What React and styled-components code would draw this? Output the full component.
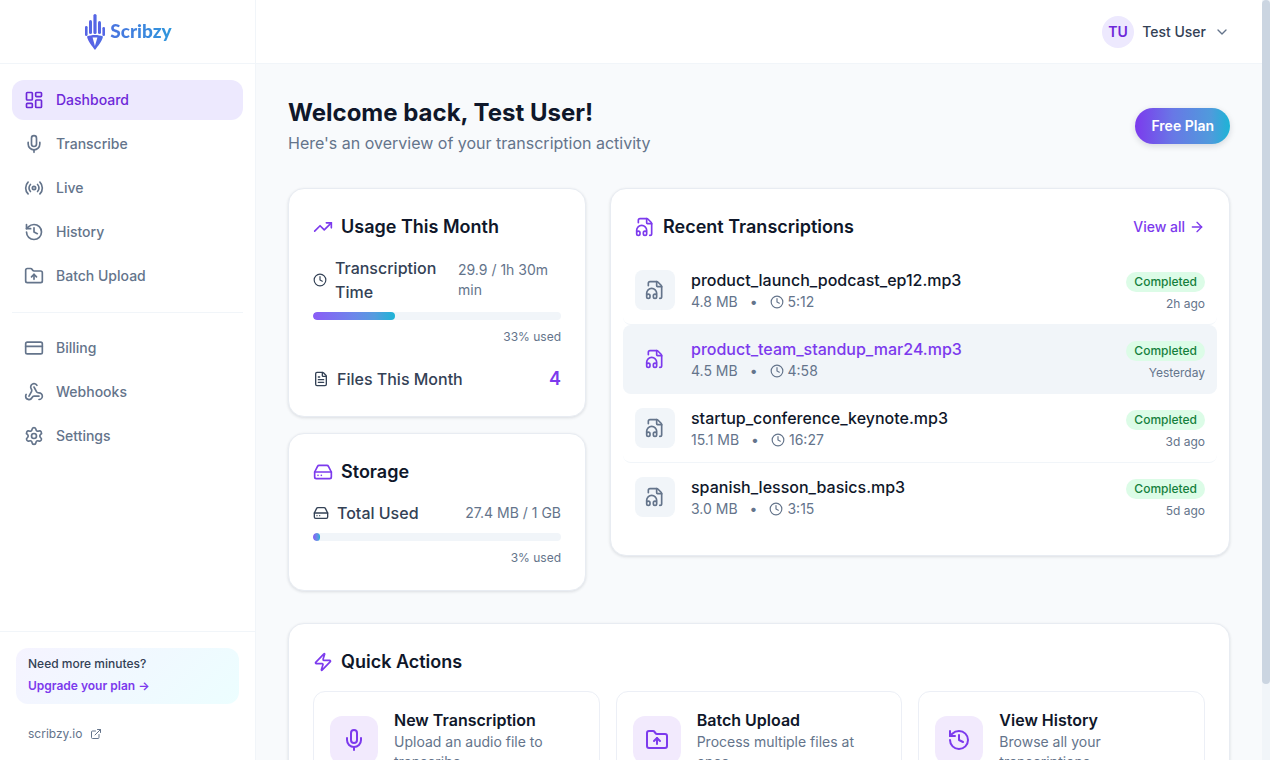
import React from 'react';
import styled, { createGlobalStyle, css } from 'styled-components';
import {
    ArrowRight,
    ChevronDown,
    Clock,
    CreditCard,
    ExternalLink,
    FileHeadphone,
    FileText,
    FolderUp,
    HardDrive,
    History,
    LayoutDashboard,
    Mic,
    Radio,
    Settings,
    TrendingUp,
    Webhook,
    Zap
} from 'lucide-react';

const mainLinks = [
    { label: 'Dashboard', icon: LayoutDashboard, active: true },
    { label: 'Transcribe', icon: Mic },
    { label: 'Live', icon: Radio },
    { label: 'History', icon: History },
    { label: 'Batch Upload', icon: FolderUp }
];

const accountLinks = [
    { label: 'Billing', icon: CreditCard },
    { label: 'Webhooks', icon: Webhook },
    { label: 'Settings', icon: Settings }
];

const transcriptions = [
    { name: 'product_launch_podcast_ep12.mp3', size: '4.8 MB', duration: '5:12', date: '2h ago' },
    { name: 'product_team_standup_mar24.mp3', size: '4.5 MB', duration: '4:58', date: 'Yesterday', selected: true },
    { name: 'startup_conference_keynote.mp3', size: '15.1 MB', duration: '16:27', date: '3d ago' },
    { name: 'spanish_lesson_basics.mp3', size: '3.0 MB', duration: '3:15', date: '5d ago' }
];

const actions = [
    { title: 'New Transcription', text: 'Upload an audio file to transcribe', icon: Mic },
    { title: 'Batch Upload', text: 'Process multiple files at once', icon: FolderUp },
    { title: 'View History', text: 'Browse all your transcriptions', icon: History }
];

const NavList = ({ links }) => (
    <Nav>
        {links.map(({ label, icon: Icon, active }) => (
            <NavLink key={label} href="#" $active={active}>
                <Icon size={20} />
                {label}
            </NavLink>
        ))}
    </Nav>
);

const Logo = () => (
    <LogoLink href="#" aria-label="Scribzy">
        <svg width="20" height="36" viewBox="0 0 20 36">
            <defs>
                <linearGradient id="nib" x1="0" y1="0" x2="1" y2="0">
                    <stop offset="0" stopColor="#5b5ee6" />
                    <stop offset="1" stopColor="#4f6ee3" />
                </linearGradient>
            </defs>
            <g fill="url(#nib)">
                <rect x="0" y="12" width="2.6" height="10" rx="1.3" />
                <rect x="4" y="6" width="3" height="14" rx="1.5" />
                <rect x="8.4" y="0" width="3.2" height="20" rx="1.6" />
                <rect x="13" y="7" width="3" height="13" rx="1.5" />
                <rect x="17.4" y="13" width="2.6" height="9" rx="1.3" />
                <path
                    fillRule="evenodd"
                    d="M2 22.5C6.5 20.5 13.5 20.5 18 22.5C17.2 27 13 32 10 36C7 32 2.8 27 2 22.5ZM7.6 23.6L9.9 32L12.4 23.6Z"
                />
            </g>
        </svg>
        <LogoText>Scribzy</LogoText>
    </LogoLink>
);

const Meter = ({ percent, label }) => (
    <div>
        <Track role="progressbar" aria-label={label} aria-valuenow={percent}>
            <Fill style={{ width: `${percent}%` }} />
        </Track>
        <MeterNote>{percent}% used</MeterNote>
    </div>
);

const App = () => (
    <Page>
        <GlobalStyle />
        <Sidebar>
            <Brand><Logo /></Brand>
            <SidebarBody>
                <NavList links={mainLinks} />
                <Divider />
                <NavList links={accountLinks} />
            </SidebarBody>
            <SidebarFooter>
                <Upgrade>
                    <UpgradeText>Need more minutes?</UpgradeText>
                    <UpgradeLink href="#">Upgrade your plan →</UpgradeLink>
                </Upgrade>
                <SiteLink href="#">scribzy.io <ExternalLink size={12} /></SiteLink>
            </SidebarFooter>
        </Sidebar>

        <Content>
            <TopBar>
                <UserButton type="button">
                    <Avatar>TU</Avatar>
                    Test User
                    <ChevronDown size={16} />
                </UserButton>
            </TopBar>

            <Main>
                <Welcome>
                    <div>
                        <Title>Welcome back, Test User!</Title>
                        <Subtitle>Here's an overview of your transcription activity</Subtitle>
                    </div>
                    <PlanButton type="button">Free Plan</PlanButton>
                </Welcome>

                <Overview>
                    <Stack>
                        <Card>
                            <CardTitle><TrendingUp size={20} />Usage This Month</CardTitle>
                            <StatRow>
                                <StatLabel><Clock size={14} />Transcription Time</StatLabel>
                                <StatValue $wraps>29.9 / 1h 30m min</StatValue>
                            </StatRow>
                            <Meter percent={33} label="Transcription time" />
                            <FilesRow>
                                <StatLabel><FileText size={16} />Files This Month</StatLabel>
                                <FilesCount>4</FilesCount>
                            </FilesRow>
                        </Card>
                        <Card>
                            <CardTitle><HardDrive size={20} />Storage</CardTitle>
                            <StatRow>
                                <StatLabel><HardDrive size={16} />Total Used</StatLabel>
                                <StatValue>27.4 MB / 1 GB</StatValue>
                            </StatRow>
                            <Meter percent={3} label="Storage" />
                        </Card>
                    </Stack>

                    <Card>
                        <CardHead>
                            <CardTitle><FileHeadphone size={20} />Recent Transcriptions</CardTitle>
                            <ViewAll href="#">View all <ArrowRight size={16} /></ViewAll>
                        </CardHead>
                        <FileList>
                            {transcriptions.map(({ name, size, duration, date, selected }) => (
                                <FileItem key={name} $selected={selected}>
                                    <FileIcon $selected={selected}><FileHeadphone size={20} /></FileIcon>
                                    <FileInfo>
                                        <FileName href="#" $selected={selected}>{name}</FileName>
                                        <FileMeta>
                                            {size}
                                            <span>•</span>
                                            <Duration><Clock size={14} />{duration}</Duration>
                                        </FileMeta>
                                    </FileInfo>
                                    <FileStatus>
                                        <Badge>Completed</Badge>
                                        <FileDate>{date}</FileDate>
                                    </FileStatus>
                                </FileItem>
                            ))}
                        </FileList>
                    </Card>
                </Overview>

                <Card>
                    <CardTitle><Zap size={20} />Quick Actions</CardTitle>
                    <ActionGrid>
                        {actions.map(({ title, text, icon: Icon }) => (
                            <Action key={title} href="#">
                                <ActionIcon><Icon size={24} /></ActionIcon>
                                <div>
                                    <ActionTitle>{title}</ActionTitle>
                                    <ActionText>{text}</ActionText>
                                </div>
                            </Action>
                        ))}
                    </ActionGrid>
                </Card>
            </Main>
        </Content>
        <ScrollRail aria-hidden="true"><ScrollThumb /></ScrollRail>
    </Page>
);

const GlobalStyle = createGlobalStyle`
    *, *::before, *::after {
        box-sizing: border-box;
    }

    body {
        margin: 0;
        background: #f8fafc;
        color: #0f172a;
        font-family: Inter, 'Liberation Sans', sans-serif;
        font-size: 16px;
        line-height: 24px;
    }

    h1, h2, h3, p, ul {
        margin: 0;
        padding: 0;
    }

    a {
        color: inherit;
        text-decoration: none;
    }

    button {
        font: inherit;
        border: 0;
        cursor: pointer;
    }

    svg {
        flex-shrink: 0;
    }
`;

const Page = styled.div`
    display: flex;
    height: 100vh;
`;

const Sidebar = styled.aside`
    display: flex;
    flex-direction: column;
    flex: 0 0 256px;
    background: #fff;
    border-right: 1px solid #f1f5f9;
`;

const Brand = styled.div`
    display: flex;
    align-items: center;
    justify-content: center;
    height: 64px;
    padding-left: 2px;
    border-bottom: 1px solid #f1f5f9;
`;

const LogoLink = styled.a`
    display: flex;
    align-items: center;
    gap: 5px;
`;

const LogoText = styled.span`
    padding-bottom: 2px;
    background: linear-gradient(90deg, #4a74e0, #2f97dc);
    background-clip: text;
    color: transparent;
    font-family: Lato, sans-serif;
    font-size: 19px;
    font-weight: 900;
`;

const SidebarBody = styled.div`
    flex: 1;
    padding: 16px 12px;
`;

const Nav = styled.nav`
    display: flex;
    flex-direction: column;
    gap: 4px;
`;

const NavLink = styled.a`
    display: flex;
    align-items: center;
    gap: 12px;
    height: 40px;
    padding: 0 12px;
    border-radius: 12px;
    background: ${({ $active }) => ($active ? '#ede9fe' : 'transparent')};
    color: ${({ $active }) => ($active ? '#6d28d9' : '#64748b')};
    font-size: 14px;
    font-weight: 500;
`;

const Divider = styled.hr`
    margin: 16px 0 15px;
    border: 0;
    border-top: 1px solid #f1f5f9;
`;

const SidebarFooter = styled.div`
    padding: 16px 16px 8px;
    border-top: 1px solid #f1f5f9;
`;

const Upgrade = styled.div`
    padding: 8px 12px;
    border-radius: 12px;
    background: linear-gradient(135deg, #f5f3ff, #ecfeff);
    font-size: 12px;
    line-height: 16px;
`;

const UpgradeText = styled.p`
    margin-bottom: 4px;
    color: #334155;
    font-weight: 500;
`;

const UpgradeLink = styled.a`
    display: block;
    color: #7c3aed;
    font-weight: 600;
    line-height: 20px;
`;

const SiteLink = styled.a`
    display: flex;
    align-items: center;
    gap: 8px;
    margin-top: 12px;
    padding: 8px 12px;
    color: #64748b;
    font-size: 12px;
    line-height: 20px;
`;

const Content = styled.div`
    flex: 1;
    min-width: 0;
    overflow-y: auto;
    scrollbar-width: none;
`;

const ScrollRail = styled.div`
    flex: 0 0 8px;
    background: #f1f5f9;
`;

const ScrollThumb = styled.div`
    height: 90%;
    border-radius: 4px;
    background: #cbd5e1;
`;

const TopBar = styled.header`
    position: sticky;
    top: 0;
    z-index: 1;
    display: flex;
    align-items: center;
    justify-content: flex-end;
    height: 64px;
    padding: 0 32px;
    border-bottom: 1px solid #f1f5f9;
    background: #fff;
`;

const UserButton = styled.button`
    display: flex;
    align-items: center;
    gap: 8px;
    padding: 0;
    background: none;
    color: #334155;
    font-size: 14px;
    font-weight: 500;

    svg {
        color: #64748b;
    }
`;

const Avatar = styled.span`
    display: flex;
    align-items: center;
    justify-content: center;
    width: 32px;
    height: 32px;
    border-radius: 50%;
    background: #ede9fe;
    color: #6d28d9;
    font-weight: 600;
`;

const Main = styled.main`
    display: flex;
    flex-direction: column;
    gap: 32px;
    padding: 32px;
`;

const Welcome = styled.div`
    display: flex;
    align-items: center;
    justify-content: space-between;
`;

const Title = styled.h1`
    font-size: 24px;
    font-weight: 700;
    line-height: 34px;
`;

const Subtitle = styled.p`
    color: #64748b;
    line-height: 26px;
`;

const PlanButton = styled.button`
    height: 36px;
    padding: 0 16px;
    border-radius: 18px;
    background: linear-gradient(90deg, #7c3aed, #6878e6 40%, #4f9bdc 80%, #1cb4d6);
    box-shadow: 0 2px 6px rgba(15, 23, 42, 0.15);
    color: #fff;
    font-size: 14px;
    font-weight: 600;
`;

const Overview = styled.div`
    display: grid;
    grid-template-columns: minmax(0, 298fr) minmax(0, 620fr);
    align-items: start;
    gap: 24px;
`;

const Stack = styled.div`
    display: flex;
    flex-direction: column;
    gap: 16px;
`;

const Card = styled.section`
    padding: 24px;
    border: 1px solid #e8ecf2;
    border-radius: 16px;
    background: #fff;
    box-shadow: 0 1px 3px rgba(15, 23, 42, 0.12);
`;

const CardTitle = styled.h2`
    display: flex;
    align-items: center;
    gap: 8px;
    font-size: 18px;
    font-weight: 600;
    line-height: 27px;

    svg {
        color: #7c3aed;
    }
`;

const CardHead = styled.div`
    display: flex;
    align-items: center;
    justify-content: space-between;
`;

const StatRow = styled.div`
    display: flex;
    align-items: center;
    justify-content: space-between;
    margin: 16px 0 8px;
`;

const StatLabel = styled.span`
    display: flex;
    align-items: center;
    gap: 8px;
    color: #334155;
    font-weight: 500;
`;

const StatValue = styled.span`
    ${({ $wraps }) => $wraps && css`
        flex: 0 0 103px;
    `}
    color: #64748b;
    font-size: 14px;
    line-height: 20px;
`;

const Track = styled.div`
    height: 8px;
    overflow: hidden;
    border-radius: 4px;
    background: #f1f5f9;
`;

const Fill = styled.div`
    height: 100%;
    border-radius: 4px;
    background: linear-gradient(90deg, #8b5cf6, #6c87ea 50%, #559cdf 75%, #1cb4d6);
`;

const MeterNote = styled.p`
    margin-top: 8px;
    color: #64748b;
    font-size: 12px;
    line-height: 17px;
    text-align: right;
`;

const FilesRow = styled.div`
    display: flex;
    align-items: center;
    justify-content: space-between;
    margin-top: 20px;
`;

const FilesCount = styled.span`
    color: #7c3aed;
    font-size: 18px;
    font-weight: 600;
    line-height: 27px;
`;

const ViewAll = styled.a`
    display: flex;
    align-items: center;
    gap: 4px;
    color: #7c3aed;
    font-size: 14px;
    font-weight: 500;
`;

const FileList = styled.ul`
    margin: 16px -12px 0;
    list-style: none;
`;

const FileItem = styled.li`
    display: flex;
    align-items: center;
    gap: 16px;
    padding: 12px;
    border-bottom: 1px solid #f1f5f9;
    border-radius: 8px;
    background: ${({ $selected }) => ($selected ? '#f1f5f9' : 'transparent')};

    &:last-child {
        border-bottom: 0;
    }
`;

const FileIcon = styled.span`
    display: flex;
    align-items: center;
    justify-content: center;
    flex: 0 0 40px;
    height: 40px;
    border-radius: 8px;
    background: #f1f5f9;
    color: ${({ $selected }) => ($selected ? '#7c3aed' : '#64748b')};
`;

const FileInfo = styled.div`
    flex: 1;
    min-width: 0;
`;

const FileName = styled.a`
    display: block;
    color: ${({ $selected }) => ($selected ? '#7c3aed' : '#0f172a')};
    font-weight: 500;
`;

const FileMeta = styled.div`
    display: flex;
    align-items: center;
    gap: 12px;
    color: #64748b;
    font-size: 14px;
    line-height: 20px;
`;

const Duration = styled.span`
    display: flex;
    align-items: center;
    gap: 4px;
`;

const FileStatus = styled.div`
    display: flex;
    flex-direction: column;
    align-items: flex-end;
    align-self: flex-end;
    gap: 4px;
    font-size: 12px;
    line-height: 16px;
`;

const Badge = styled.span`
    padding: 2px 8px;
    border-radius: 10px;
    background: #dcfce7;
    color: #15803d;
    font-weight: 500;
`;

const FileDate = styled.span`
    color: #64748b;
`;

const ActionGrid = styled.div`
    display: grid;
    grid-template-columns: repeat(3, minmax(0, 1fr));
    gap: 16px;
    margin-top: 16px;
`;

const Action = styled.a`
    display: flex;
    align-items: center;
    gap: 16px;
    padding: 16px;
    border: 1px solid #eceff6;
    border-radius: 12px;
`;

const ActionIcon = styled.span`
    display: flex;
    align-items: center;
    justify-content: center;
    flex: 0 0 48px;
    height: 48px;
    border-radius: 12px;
    background: #f2eafd;
    color: #7c3aed;
`;

const ActionTitle = styled.h3`
    font-size: 16px;
    font-weight: 600;
    line-height: 24px;
`;

const ActionText = styled.p`
    color: #64748b;
    font-size: 14px;
    line-height: 20px;
`;

export default App;
